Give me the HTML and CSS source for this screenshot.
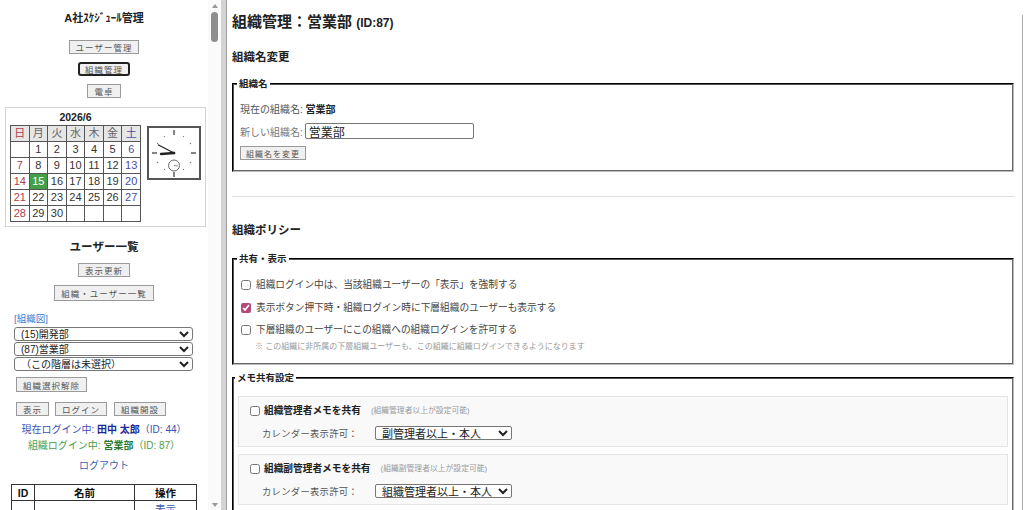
FILE: index.html
```html
<!DOCTYPE html>
<html lang="ja">
<head>
<meta charset="utf-8">
<title>組織管理</title>
<link rel="stylesheet" href="styles.css">
</head>
<body>
<div class="app">

  <aside class="side">
    <div class="side-body">
      <div class="app-title">A社ｽｹｼﾞｭｰﾙ管理</div>

      <div class="nav">
        <button class="btn">ユーザー管理</button>
        <button class="btn is-focus">組織管理</button>
        <button class="btn">電卓</button>
      </div>

      <div class="cal-box">
        <div class="cal">
          <div class="cal-title">2026/6</div>
          <table class="cal-table">
            <tr class="cal-head"><th class="sun">日</th><th>月</th><th>火</th><th>水</th><th>木</th><th>金</th><th class="sat">土</th></tr>
            <tr><td></td><td>1</td><td>2</td><td>3</td><td>4</td><td>5</td><td class="sat">6</td></tr>
            <tr><td class="sun">7</td><td>8</td><td>9</td><td>10</td><td>11</td><td>12</td><td class="sat">13</td></tr>
            <tr><td class="sun">14</td><td class="today">15</td><td>16</td><td>17</td><td>18</td><td>19</td><td class="sat">20</td></tr>
            <tr><td class="sun">21</td><td>22</td><td>23</td><td>24</td><td>25</td><td>26</td><td class="sat">27</td></tr>
            <tr><td class="sun">28</td><td>29</td><td>30</td><td></td><td></td><td></td><td></td></tr>
          </table>
        </div>
        <div class="clock">
          <svg width="50" height="50" viewBox="0 0 50 50">
            <g stroke="#333" stroke-width="1.2">
              <line x1="25" y1="2" x2="25" y2="7"/>
              <line x1="25" y1="44" x2="25" y2="49"/>
              <line x1="3" y1="25" x2="8" y2="25"/>
              <line x1="42" y1="25" x2="47" y2="25"/>
            </g>
            <g fill="#777">
              <circle cx="34.5" cy="8.6" r="0.7"/>
              <circle cx="41.4" cy="15.5" r="0.7"/>
              <circle cx="41.4" cy="34.5" r="0.7"/>
              <circle cx="34.5" cy="41.4" r="0.7"/>
              <circle cx="15.5" cy="41.4" r="0.7"/>
              <circle cx="8.6" cy="34.5" r="0.7"/>
              <circle cx="8.6" cy="15.5" r="0.7"/>
              <circle cx="15.5" cy="8.6" r="0.7"/>
            </g>
            <circle cx="25" cy="37.5" r="5.5" fill="none" stroke="#444" stroke-width="0.8"/>
            <line x1="25" y1="37.5" x2="29" y2="38" stroke="#555" stroke-width="0.7"/>
            <line x1="25" y1="25" x2="12" y2="26" stroke="#222" stroke-width="2.4" stroke-linecap="round"/>
            <line x1="25" y1="25" x2="9.5" y2="17" stroke="#222" stroke-width="1.3" stroke-linecap="round"/>
            <circle cx="25" cy="25" r="1.3" fill="#222"/>
          </svg>
        </div>
      </div>

      <div class="users">
        <div class="users-title">ユーザー一覧</div>
        <button class="btn">表示更新</button>
        <button class="btn btn-tall">組織・ユーザー一覧</button>
      </div>

      <div class="org">
        <a class="org-link" href="#">[組織図]</a>
        <select class="org-select"><option>(15)開発部</option></select>
        <select class="org-select"><option>(87)営業部</option></select>
        <select class="org-select"><option>（この階層は未選択）</option></select>
        <div class="org-clear"><button class="btn">組織選択解除</button></div>
        <div class="org-actions">
          <button class="btn">表示</button>
          <button class="btn">ログイン</button>
          <button class="btn">組織開設</button>
        </div>
      </div>

      <div class="status">
        <div class="status-user">現在ログイン中: <b>田中 太郎</b>（ID: 44）</div>
        <div class="status-org">組織ログイン中: <b>営業部</b>（ID: 87）</div>
        <a class="logout" href="#">ログアウト</a>
      </div>

      <table class="user-table">
        <tr><th class="c-id">ID</th><th class="c-name">名前</th><th class="c-op">操作</th></tr>
        <tr><td></td><td></td><td><a href="#">表示</a></td></tr>
      </table>
    </div>
    <div class="vbar">
      <span class="arrow-up"></span>
      <span class="thumb"></span>
      <span class="spacer"></span>
      <span class="arrow-down"></span>
    </div>
  </aside>

  <div class="split"></div>

  <main class="main">
    <h1 class="page-title">組織管理：営業部 <span class="page-id">(ID:87)</span></h1>

    <h3 class="sec-title">組織名変更</h3>
    <fieldset class="box">
      <legend>組織名</legend>
      <div class="name-now">現在の組織名: <b>営業部</b></div>
      <div class="name-new">新しい組織名: <input class="name-input" type="text" value="営業部"></div>
      <button class="btn btn-small">組織名を変更</button>
    </fieldset>

    <hr class="rule">

    <h3 class="sec-title sec-policy">組織ポリシー</h3>
    <fieldset class="box box-share">
      <legend>共有・表示</legend>
      <label class="check"><input type="checkbox"> 組織ログイン中は、当該組織ユーザーの「表示」を強制する</label>
      <label class="check"><input type="checkbox" checked> 表示ボタン押下時・組織ログイン時に下層組織のユーザーも表示する</label>
      <label class="check"><input type="checkbox"> 下層組織のユーザーにこの組織への組織ログインを許可する</label>
      <div class="note">※ この組織に非所属の下層組織ユーザーも、この組織に組織ログインできるようになります</div>
    </fieldset>

    <fieldset class="box box-memo">
      <legend>メモ共有設定</legend>
      <div class="memo">
        <label class="memo-check"><input type="checkbox"> <b>組織管理者メモを共有</b> <small>(組織管理者以上が設定可能)</small></label>
        <div class="memo-row">
          <span class="memo-label">カレンダー表示許可：</span>
          <select class="memo-select"><option>副管理者以上・本人</option></select>
        </div>
      </div>
      <div class="memo">
        <label class="memo-check"><input type="checkbox"> <b>組織副管理者メモを共有</b> <small>(組織副管理者以上が設定可能)</small></label>
        <div class="memo-row">
          <span class="memo-label">カレンダー表示許可：</span>
          <select class="memo-select"><option>組織管理者以上・本人</option></select>
        </div>
      </div>
    </fieldset>
  </main>

  <div class="rbar"><span class="rbar-line"></span></div>
</div>
</body>
</html>
```

FILE: styles.css
```css
html, body {
  margin: 0;
  padding: 0;
  background: #fff;
}
body {
  font-family: "Liberation Sans", "Noto Sans CJK JP", sans-serif;
  color: #333;
  font-size: 10px;
}
.app {
  display: flex;
  height: 510px;
  overflow: hidden;
}

/* left frame */
.side {
  display: flex;
  width: 221px;
  flex: none;
}
.side-body {
  width: 208px;
  overflow: hidden;
}
.app-title {
  text-align: center;
  font-weight: bold;
  font-size: 11px;
  line-height: 16px;
  padding-top: 10px;
  color: #222;
}
.nav {
  display: flex;
  flex-direction: column;
  align-items: center;
  gap: 8px;
  margin-top: 14px;
}
.btn {
  display: inline-flex;
  align-items: center;
  box-sizing: border-box;
  height: 14px;
  padding: 0 6px;
  border: 1px solid #9a9a9a;
  background: #f0f0f0;
  color: #555;
  font-family: inherit;
  font-size: 8.5px;
  letter-spacing: 1px;
  border-radius: 0;
}
.btn.is-focus {
  border: 2px solid #222;
  border-radius: 3px;
  padding: 0 5px;
}
.btn-tall {
  height: 16px;
}

.cal-box {
  display: flex;
  align-items: flex-start;
  margin: 9px 2px 0 5px;
  padding: 2px 4px 4px 4px;
  border: 1px solid #d4d4d4;
}
.cal-title {
  text-align: center;
  font-weight: bold;
  font-size: 10.5px;
  line-height: 15px;
  color: #222;
}
.cal-table {
  border-collapse: collapse;
  width: 131px;
  font-size: 11px;
}
.cal-table th, .cal-table td {
  border: 1px solid #555;
  height: 15px;
  padding: 0;
  text-align: center;
  line-height: 15px;
  font-weight: normal;
  color: #333;
}
.cal-head th {
  background: #e6e6e6;
  color: #666;
}
.cal-table .sun { color: #b0404f; }
.cal-table .sat { color: #4b4ba6; }
.cal-table .today {
  background: #43a047;
  color: #fff;
}
.clock {
  margin: 16px 0 0 6px;
  width: 50px;
  height: 50px;
  border: 2px solid #555;
  background: #fff;
}
.clock svg { display: block; }

.users {
  display: flex;
  flex-direction: column;
  align-items: center;
  gap: 8px;
  margin-top: 12px;
}
.users-title {
  font-weight: bold;
  font-size: 11.5px;
  line-height: 16px;
  color: #222;
}

.org {
  padding: 0 15px 0 14px;
  margin-top: 12px;
}
.org-link {
  display: block;
  color: #3b7bd0;
  text-decoration: none;
  font-size: 9.5px;
  line-height: 12px;
  margin-bottom: 2px;
}
.org-select {
  display: block;
  width: 179px;
  height: 14px;
  margin-bottom: 1px;
  padding: 0 2px;
  font-family: inherit;
  font-size: 10px;
  color: #222;
  border: 1px solid #777;
  border-radius: 3px;
  background: #fff;
}
.org-clear {
  margin: 6px 0 0 2px;
}
.org-clear .btn { height: 15px; }
.org-actions {
  display: flex;
  gap: 6px;
  margin: 10px 0 0 2px;
}
.org-actions .btn:last-child { margin-left: 1px; }

.status {
  text-align: center;
  font-size: 10px;
  line-height: 12px;
  margin-top: 8px;
}
.status-user {
  color: #3d4fb4;
}
.status-user b { color: #1d2b96; }
.status-org {
  color: #4c9c4c;
  margin-top: 4px;
}
.status-org b { color: #2b7a2b; }
.logout {
  display: inline-block;
  margin-top: 8px;
  color: #3a5fb0;
  text-decoration: none;
}

.user-table {
  margin: 12px 0 0 11px;
  width: 186px;
  border-collapse: collapse;
  font-size: 10.5px;
}
.user-table th, .user-table td {
  border: 1px solid #333;
  height: 15px;
  padding: 0;
  text-align: center;
}
.user-table th { color: #111; }
.user-table .c-id { width: 22px; }
.user-table .c-name { width: 99px; }
.user-table a {
  color: #3a5fb0;
  text-decoration: none;
}

.vbar {
  width: 13px;
  display: flex;
  flex-direction: column;
  align-items: center;
  background: #fafafa;
}
.arrow-up, .arrow-down {
  width: 0;
  height: 0;
  border-left: 3px solid transparent;
  border-right: 3px solid transparent;
}
.arrow-up {
  margin-top: 4px;
  border-bottom: 4px solid #999;
}
.arrow-down {
  margin-bottom: 3px;
  border-top: 4px solid #999;
}
.thumb {
  margin-top: 4px;
  width: 7px;
  height: 30px;
  border-radius: 4px;
  background: #8e8e8e;
}
.spacer { flex: 1; }

.split {
  width: 5px;
  flex: none;
  background: #d3d3d3;
  border-right: 1px solid #9e9e9e;
}

/* main frame */
.main {
  flex: 1;
  padding: 0 2px 0 5px;
  overflow: hidden;
}
.page-title {
  margin: 12px 0 0;
  font-size: 15px;
  line-height: 20px;
  color: #222;
}
.page-id {
  font-size: 12px;
}
.sec-title {
  margin: 16px 0 0;
  font-size: 11.5px;
  line-height: 16px;
  color: #222;
}
.box {
  margin: 13px 0 0;
  padding: 0 6px 10px;
  border: 2px groove #bbb;
  border-top-color: #555;
  border-left-color: #555;
}
.box legend {
  padding: 0 2px;
  margin-left: -3px;
  font-size: 9.5px;
  line-height: 12px;
  font-weight: bold;
  color: #222;
}
.name-now {
  margin-top: 12px;
  line-height: 16px;
  color: #555;
}
.name-now b { color: #222; }
.name-new {
  margin-top: 5px;
  display: flex;
  align-items: center;
  color: #777;
}
.name-input {
  box-sizing: border-box;
  width: 169px;
  height: 16px;
  margin-left: 2px;
  padding: 0 3px;
  border: 1px solid #777;
  border-radius: 2px;
  font-family: inherit;
  font-size: 12px;
  color: #222;
}
.btn-small {
  margin-top: 7px;
  font-size: 8px;
  padding: 0 5px;
}

.rule {
  margin: 24px 0 0;
  border: 0;
  border-top: 1px solid #ddd;
}
.sec-policy {
  margin-top: 25px;
}
.box-share {
  margin-top: 15px;
}
.check {
  display: flex;
  align-items: center;
  gap: 5px;
  line-height: 16px;
  font-size: 9.7px;
  color: #444;
  margin-top: 7px;
}
.check:first-of-type { margin-top: 12px; }
.check + .check + .check { margin-top: 6px; }
.check input, .memo-check input {
  width: 10px;
  height: 10px;
  margin: 0 0 0 1px;
  accent-color: #b5487a;
}
.note {
  margin-top: 3px;
  padding-left: 15px;
  font-size: 8px;
  line-height: 12px;
  color: #999;
}
.box-memo {
  margin-top: 7px;
  padding: 0 4px 10px;
}
.memo {
  margin-top: 12px;
  padding: 7px 10px 6px;
  background: #f9f9f9;
  border: 1px solid #e4e4e4;
}
.memo + .memo { margin-top: 7px; }
.memo-check {
  display: flex;
  align-items: center;
  gap: 4px;
  line-height: 14px;
  font-size: 9.7px;
  color: #222;
}
.memo-check small {
  margin-left: 6px;
  font-size: 7.8px;
  color: #999;
}
.memo-row {
  display: flex;
  align-items: center;
  margin-top: 8px;
  padding-left: 13px;
}
.memo-label {
  width: 113px;
  font-size: 9.3px;
  color: #555;
  letter-spacing: 0.3px;
}
.memo-select {
  width: 137px;
  height: 14px;
  padding: 0 2px;
  font-family: inherit;
  font-size: 11px;
  color: #222;
  border: 1px solid #777;
  border-radius: 2px;
  background: #fff;
}

.rbar {
  width: 8px;
  flex: none;
  display: flex;
  justify-content: flex-end;
}
.rbar-line {
  margin: 15px 1px 0 0;
  border-right: 1px solid #aaa;
}
```
